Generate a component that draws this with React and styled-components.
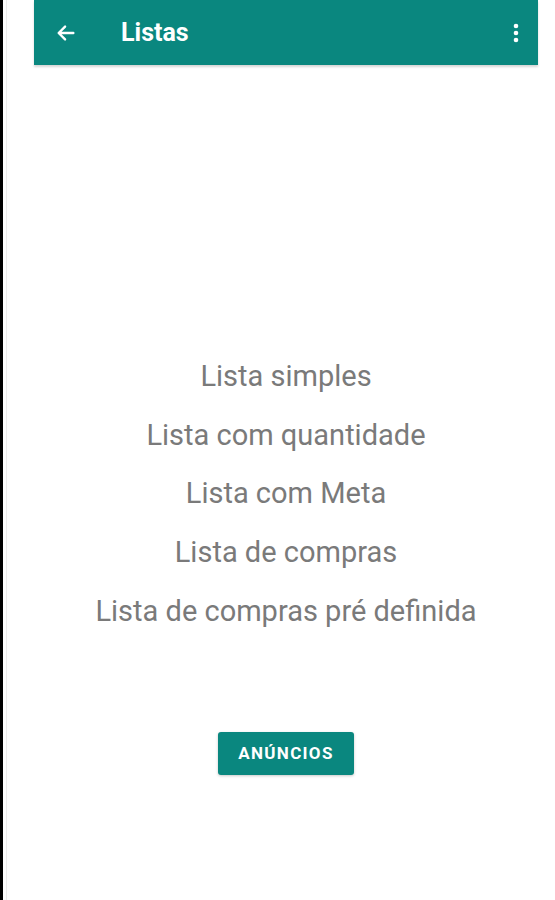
import React from "react";
import styled, { createGlobalStyle } from "styled-components";

const Global = createGlobalStyle`
  html, body { margin: 0; padding: 0; background: #fff; }
  body { font-family: Roboto, "Noto Sans", Arial, sans-serif; }
`;

const Frame = styled.div`
  display: flex;
  height: 900px;
  background: #fff;
`;

const EdgeBar = styled.div`
  width: 3px;
  background: #000;
  flex-shrink: 0;
`;

const Gutter = styled.div`
  width: 27px;
  flex-shrink: 0;
  margin-left: 3px;
  border-left: 1px solid #ececec;
`;

const Screen = styled.div`
  width: 504px;
  display: flex;
  flex-direction: column;
`;

const AppBar = styled.header`
  height: 65px;
  background: #0a877f;
  display: flex;
  align-items: center;
  padding: 0 18px 0 20px;
  box-shadow: 0 2px 2px rgba(0, 0, 0, 0.16);
  color: #fff;
`;

const IconButton = styled.button`
  background: none;
  border: 0;
  padding: 0;
  display: flex;
  align-items: center;
  justify-content: center;
  width: ${(p) => p.$w || 24}px;
  height: 24px;
  color: #fff;
`;

const Title = styled.h1`
  margin: 0 0 0 43px;
  font-size: 25px;
  font-weight: 700;
  flex: 1;
`;

const Content = styled.main`
  display: flex;
  flex-direction: column;
  align-items: center;
  padding-top: 282px;
`;

const MenuList = styled.ul`
  list-style: none;
  margin: 0;
  padding: 0;
  display: flex;
  flex-direction: column;
  align-items: center;
`;

const MenuItem = styled.li`
  font-size: 29px;
  line-height: 58.7px;
  color: #7a7a7a;
`;

const AdButton = styled.button`
  margin-top: 91px;
  width: 136px;
  height: 43px;
  background: #0a877f;
  color: #fff;
  border: 0;
  border-radius: 3px;
  font-family: Roboto, Arial, sans-serif;
  font-weight: 700;
  font-size: 17px;
  letter-spacing: 1.3px;
  box-shadow: 0 1px 3px rgba(0, 0, 0, 0.22);
`;

const items = [
  "Lista simples",
  "Lista com quantidade",
  "Lista com Meta",
  "Lista de compras",
  "Lista de compras pré definida",
];

export default function App() {
  return (
    <>
      <Global />
      <Frame>
        <EdgeBar />
        <Gutter />
        <Screen>
          <AppBar>
            <IconButton aria-label="Voltar">
              <svg width="22" height="22" viewBox="0 0 24 24" fill="none">
                <path d="M20 12H4.5M11 5l-7 7 7 7" stroke="#fff" strokeWidth="2.6" strokeLinecap="round" strokeLinejoin="round" />
              </svg>
            </IconButton>
            <Title>Listas</Title>
            <IconButton aria-label="Mais" $w={8}>
              <svg width="6" height="20" viewBox="0 0 6 20">
                <circle cx="3" cy="3" r="2.3" fill="#fff" />
                <circle cx="3" cy="10" r="2.3" fill="#fff" />
                <circle cx="3" cy="17" r="2.3" fill="#fff" />
              </svg>
            </IconButton>
          </AppBar>
          <Content>
            <MenuList>
              {items.map((t) => (
                <MenuItem key={t}>{t}</MenuItem>
              ))}
            </MenuList>
            <AdButton>ANÚNCIOS</AdButton>
          </Content>
        </Screen>
      </Frame>
    </>
  );
}
